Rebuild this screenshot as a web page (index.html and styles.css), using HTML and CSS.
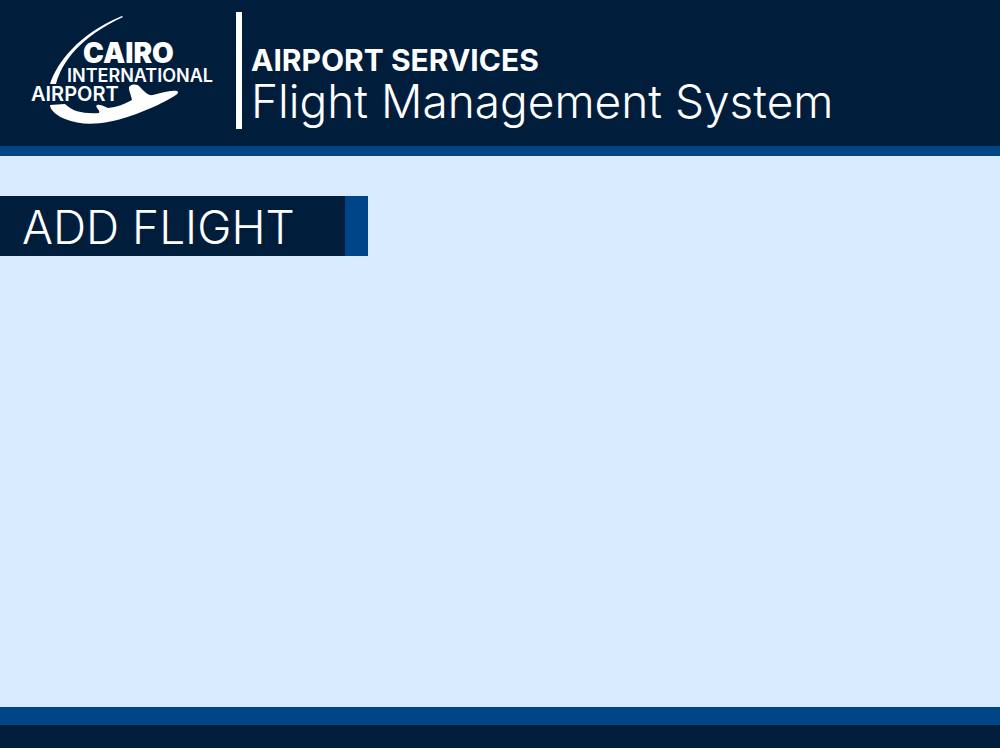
FILE: index.html
```html
<!DOCTYPE html>
<html lang="en">
<head>
<meta charset="utf-8">
<meta name="viewport" content="width=device-width, initial-scale=1">
<title>Flight Management System</title>
<link rel="stylesheet" href="styles.css">
</head>
<body>
<header class="header">
  <svg class="logo" viewBox="0 0 236 146" role="img" aria-label="Cairo International Airport">
    <path d="M50 84C57 63 78 34 122 16L123 17C80 37 62 62 56 84Z"/>
    <path d="M50 105L65 104C73 112 85 114 99 113C101 110 94 107 97 105C102 104 104 107 108 108C117 107 125 104 132 100C131 94 127 87 130 86C133 84 137 84 140 87C145 92 148 96 153 95C162 93 169 90 177 91C180 93 176 95 171 98C156 107 126 119 108 122C92 125 77 124 65 119C57 116 50 110 50 105Z"/>
    <text class="logo-large" x="83" y="63">CAIRO</text>
    <text class="logo-medium" x="67" y="82">INTERNATIONAL</text>
    <text class="logo-small" x="31" y="101">AIRPORT</text>
  </svg>
  <div class="titles">
    <p class="department">AIRPORT SERVICES</p>
    <h1 class="system">Flight Management System</h1>
  </div>
</header>
<main class="content">
  <h2 class="page-title">ADD FLIGHT</h2>
</main>
<footer class="footer"></footer>
</body>
</html>
```
FILE: styles.css
```css
* { box-sizing: border-box; }
body {
  margin: 0;
  min-height: 100vh;
  display: flex;
  flex-direction: column;
  background: #d8eaff;
  color: #fff;
  font-family: Inter, "Liberation Sans", sans-serif;
}
.header {
  display: flex;
  align-items: flex-start;
  background: #001e3c;
  border-bottom: 10px solid #004588;
}
.logo {
  flex: none;
  width: 236px;
  height: 146px;
  fill: #fff;
}
.logo-large { font-size: 28px; font-weight: 900; }
.logo-medium { font-size: 18px; font-weight: 600; }
.logo-small { font-size: 20px; font-weight: 600; }
.titles {
  margin-top: 12px;
  padding: 32px 0 3px 9px;
  border-left: 6px solid #fff;
}
.department {
  margin: 0;
  font-size: 30px;
  font-weight: 700;
  line-height: 32px;
}
.system {
  margin: 0;
  font-size: 46px;
  font-weight: 300;
  line-height: 50px;
}
.content {
  flex: 1;
  padding: 40px 0;
}
.page-title {
  width: fit-content;
  margin: 0;
  padding: 2px 50px 0 22px;
  background: #001e3c;
  border-right: 23px solid #004588;
  font-size: 46px;
  font-weight: 300;
  line-height: 58px;
}
.footer {
  height: 41px;
  background: #001e3c;
  border-top: 18px solid #004588;
}
```
